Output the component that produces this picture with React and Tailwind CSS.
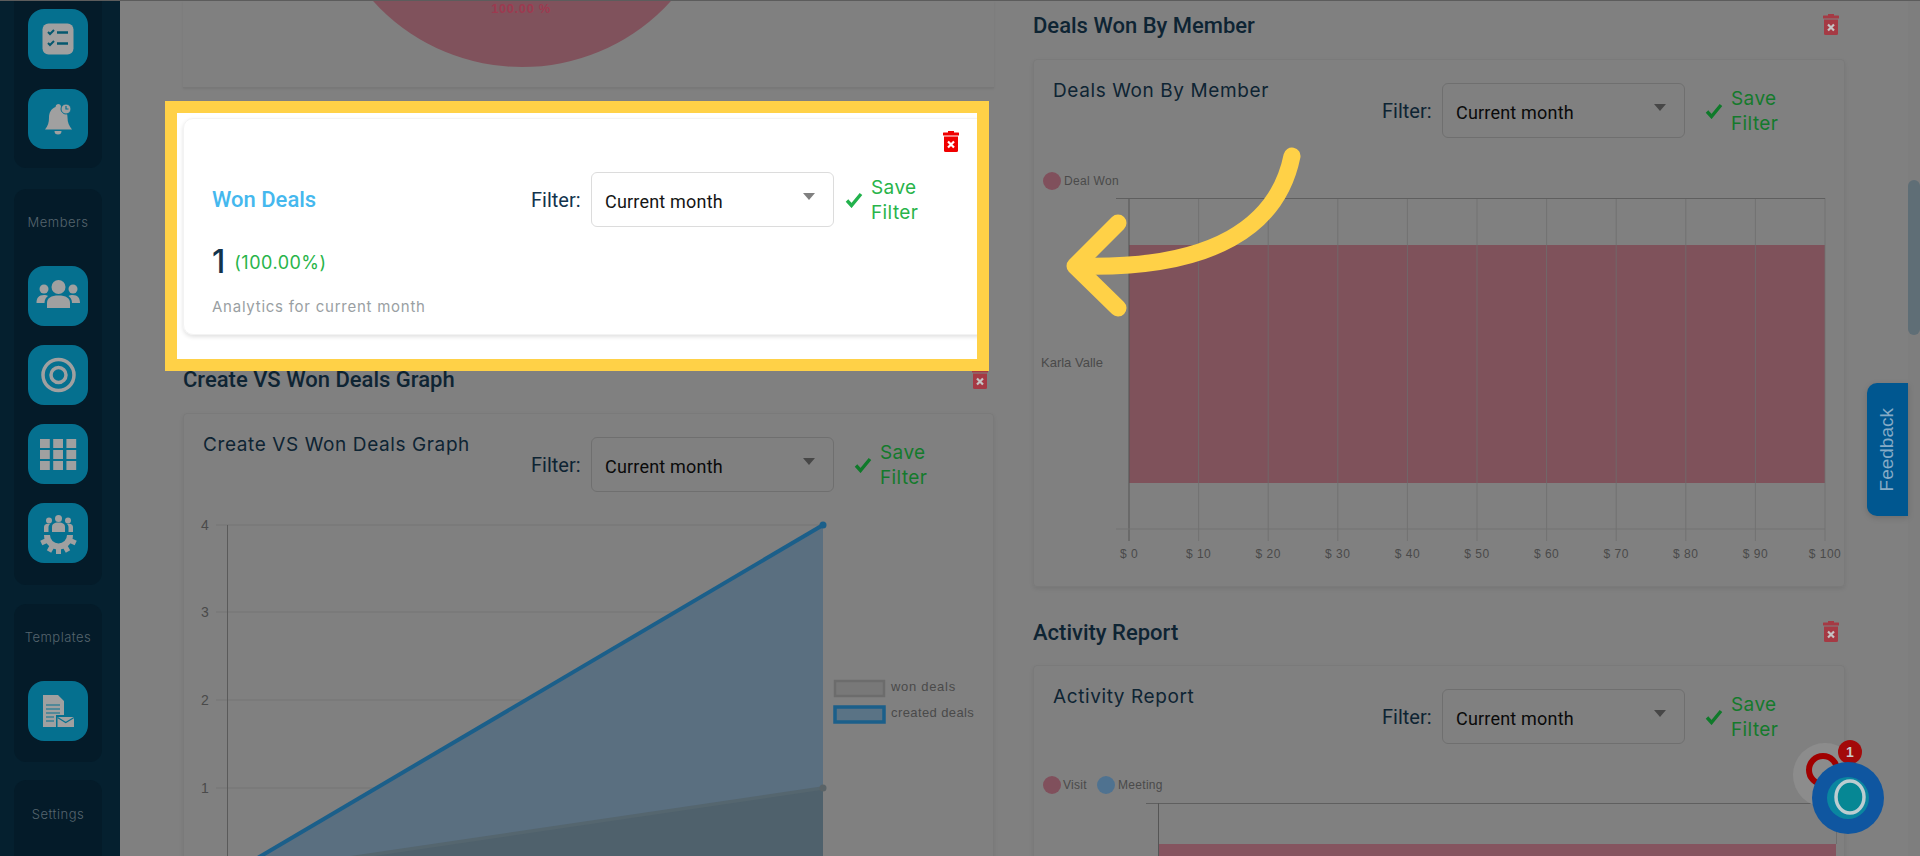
const roboto = "font-['Roboto',sans-serif]";
const inter = "font-['Inter',sans-serif]";
const btnBlue = "#05708f";

const Trash = ({ fill = "#a53a44", cross = "#c4c4c4" }) => (
  <svg width="16" height="21" viewBox="0 0 16 21" className="shrink-0">
    <rect x="5" y="0" width="6" height="2" fill={fill} />
    <rect x="0" y="1.5" width="16" height="3" rx="0.5" fill={fill} />
    <path d="M1 5.5h14V19.5a1.5 1.5 0 0 1-1.500 1.500H2.500A1.500 1.500 0 0 1 1 19.500Z" fill={fill} />
    <path d="M5 10.500l6 6M11 10.500l-6 6" stroke={cross} strokeWidth="2.200" />
  </svg>
);

const Check = ({ color }) => (
  <svg width="18" height="16" viewBox="0 0 18 16" className="shrink-0">
    <path d="M2 8.500l4.500 5L16 2" fill="none" stroke={color} strokeWidth="3.400" />
  </svg>
);

// filter + select + save, used on every card
const FilterBar = ({ light }) => (
  <div className={`flex items-center ${roboto}`}>
    <span className={`w-[60px] text-[20px] ${light ? "text-[#12344d]" : "text-[#0e2433]"}`}>Filter:</span>
    <div
      className={`flex h-[55px] w-[243px] items-center justify-between rounded-[6px] border pl-[13px] pr-[18px] ${
        light ? "border-[#dcdcdc] bg-white" : "border-[#6f6f6f]"
      }`}
    >
      <span className={`pt-1 text-[18px] tracking-[0.2px] ${light ? "text-[#151515]" : "text-[#0a0a0a]"}`}>Current month</span>
      <svg width="12" height="7" viewBox="0 0 12 7" className="mb-[6px]">
        <path d="M0 0h12L6 7Z" fill={light ? "#808080" : "#474747"} />
      </svg>
    </div>
    <div className={`flex items-center gap-2 ${light ? "ml-[11px]" : "ml-5"}`}>
      <Check color={light ? "#22b24c" : "#0f7a2a"} />
      <span className={`w-[50px] text-[19px] leading-[25px] tracking-[0.4px] ${inter} ${light ? "text-[#28b44a]" : "text-[#147a2c]"}`}>
        Save Filter
      </span>
    </div>
  </div>
);

const SectionTitle = ({ children }) => (
  <div className="flex h-6 items-center justify-between pr-[6px]">
    <h3 className={`text-[22px] font-medium text-[#0e2433] ${roboto}`}>{children}</h3>
    <div className="mb-[2px]">
      <Trash />
    </div>
  </div>
);

const CardHeader = ({ title }) => (
  <div className="flex items-start justify-between pl-[19px] pr-[63px] pt-[19px]">
    <h4 className={`text-[19px] leading-6 tracking-[0.6px] text-[#0e2433] ${inter}`}>{title}</h4>
    <div className="mt-1">
      <FilterBar />
    </div>
  </div>
);

const ChartCard = ({ title, children, className = "" }) => (
  <div className={`rounded-[4px] border border-[#7a7a7a] shadow-[0_2px_4px_rgba(0,0,0,0.08)] ${className}`}>
    <CardHeader title={title} />
    {children}
  </div>
);

const axisText = { fontFamily: "'Liberation Sans', sans-serif", fill: "#4a4a4a" };

const LineChart = () => (
  <svg viewBox="184 500 808 400" className="block h-[400px] w-[808px]">
    {[526, 613, 701, 789].map((y) => (
      <line key={y} x1="216" x2="823" y1={y} y2={y} stroke="#757575" />
    ))}
    {[["4", 526], ["3", 613], ["2", 701], ["1", 789]].map(([t, y]) => (
      <text key={t} x="205" y={y + 5} fontSize="14" textAnchor="middle" style={axisText}>{t}</text>
    ))}
    <line x1="227.500" x2="227.500" y1="526" y2="900" stroke="#5a5a5a" />
    <path d="M227 877L823 526V900H227Z" fill="#5a6f80" />
    <path d="M227 877L823 789V900H227Z" fill="#4f616c" />
    <path d="M227 877L823 789" stroke="#55666f" strokeWidth="3.500" fill="none" />
    <circle cx="823" cy="789" r="3.500" fill="#5a6367" />
    <path d="M227 877L823 526" stroke="#1b5f8a" strokeWidth="4" fill="none" />
    <circle cx="823" cy="526" r="3.500" fill="#1b5f8a" />
    <rect x="835" y="682" width="49" height="15" fill="#787878" stroke="#6c6c6c" strokeWidth="2.500" />
    <rect x="835" y="708" width="49" height="15" fill="#5a7385" stroke="#1b5f8a" strokeWidth="3.500" />
    <text x="891" y="692" fontSize="13" letterSpacing="0.700" style={axisText}>won deals</text>
    <text x="891" y="718" fontSize="13" letterSpacing="0.400" style={axisText}>created deals</text>
  </svg>
);

const ticks = [0, 10, 20, 30, 40, 50, 60, 70, 80, 90, 100];

const BarChart = () => (
  <svg viewBox="1034 160 810 400" className="block h-[400px] w-[810px]">
    <circle cx="1052" cy="181" r="9" fill="#80505c" />
    <text x="1064" y="185" fontSize="12" letterSpacing="0.300" style={axisText}>Deal Won</text>
    <path d="M1129 245H1825V483H1129Z" fill="#7f525b" />
    {ticks.map((t, i) => (
      <g key={t}>
        <line x1={1129 + i * 69.6} x2={1129 + i * 69.6} y1="198" y2="541" stroke={i ? "#6e6e6e" : "#555"} strokeOpacity={i ? 0.8 : 1} />
        <text x={1129 + i * 69.6} y="558" fontSize="12" letterSpacing="0.500" textAnchor="middle" style={axisText}>{`$ ${t}`}</text>
      </g>
    ))}
    <line x1="1116" x2="1825" y1="198.500" y2="198.500" stroke="#5f5f5f" />
    <line x1="1116" x2="1825" y1="529" y2="529" stroke="#727272" />
    <text x="1041" y="367" fontSize="13" style={axisText}>Karla Valle</text>
  </svg>
);

const ActivityChart = () => (
  <svg viewBox="1034 760 810 100" className="block h-[100px] w-[810px]">
    <circle cx="1052" cy="786" r="9" fill="#80505c" />
    <text x="1063" y="790" fontSize="12" letterSpacing="0.300" style={axisText}>Visit</text>
    <circle cx="1106" cy="786" r="9" fill="#4f7290" />
    <text x="1118" y="790" fontSize="12" letterSpacing="0.300" style={axisText}>Meeting</text>
    <path d="M1158 845H1836V860H1158Z" fill="#85545f" />
    <line x1="1146" x2="1836" y1="804.500" y2="804.500" stroke="#5f5f5f" />
    <line x1="1158.500" x2="1158.500" y1="804" y2="860" stroke="#555" />
    <line x1="1836.500" x2="1836.500" y1="804" y2="845" stroke="#6e6e6e" />
  </svg>
);

const SideBtn = ({ children }) => (
  <div className="flex h-[60px] w-[60px] items-center justify-center rounded-[16px] bg-[#05708f]">
    <svg width="44" height="44" viewBox="0 0 44 44" fill="#a0a0a0">{children}</svg>
  </div>
);

const SideLabel = ({ children }) => (
  <div className={`h-5 text-center text-[13px] font-light leading-5 tracking-[0.5px] text-[#56656e] ${inter}`}>{children}</div>
);

const Sidebar = () => (
  <aside className="flex h-full w-[120px] shrink-0 flex-col bg-[#05202f] pl-[14px] pr-[18px]">
    <div className="-mt-[21px] flex flex-col items-center gap-5 rounded-[12px] bg-[#041b29] pb-[19px] pt-[29px]">
      <SideBtn>
        <rect x="6.500" y="6.500" width="31" height="31" rx="6" />
        <path d="M12 15l2 2 4-4M12 26l2 2 4-4" fill="none" stroke="#04586f" strokeWidth="2" />
        <path d="M21 15.500h11M21 26.500h11" fill="none" stroke="#04586f" strokeWidth="2.400" />
      </SideBtn>
      <SideBtn>
        <path d="M22 7a3 3 0 0 1 3 3c5 1.500 6.500 6 6.500 10.500 0 5 1.500 8.500 4.500 12H9c3-3.500 4-7 4-12C13 16 15 11.500 19.500 10A3 3 0 0 1 22 7Z" />
        <path d="M18.500 34h7a3.500 3.500 0 0 1-7 0Z" />
        <circle cx="30" cy="12" r="5" stroke={btnBlue} strokeWidth="1" />
        <path d="M30 9v3h2.500" fill="none" stroke={btnBlue} strokeWidth="1.200" />
      </SideBtn>
    </div>
    <div className="mt-[21px] flex flex-col items-center rounded-[12px] bg-[#041b29] pb-[22px] pt-[23px]">
      <SideLabel>Members</SideLabel>
      <div className="mt-[34px] flex flex-col gap-[19px]">
        <SideBtn>
          <circle cx="22.500" cy="13" r="7" />
          <circle cx="8" cy="15" r="4.500" />
          <circle cx="37" cy="15" r="4.500" />
          <path d="M11 34v-5c0-5 4-7.500 11.500-7.500S34 24 34 29v5Z" />
          <path d="M0.500 29c0-5 2-8 7.500-8 1.500 0 3 0.300 4 1-2 1.500-3.500 3.500-3.500 7Z" />
          <path d="M44 29c0-5-2-8-7.500-8-1.500 0-3 0.300-4 1 2 1.500 3.500 3.500 3.500 7Z" />
        </SideBtn>
        <SideBtn>
          <circle cx="22.500" cy="22" r="15.500" fill="none" stroke="#a0a0a0" strokeWidth="3.500" />
          <circle cx="22.500" cy="22" r="7.500" fill="none" stroke="#a0a0a0" strokeWidth="3.500" />
        </SideBtn>
        <SideBtn>
          {[8, 19, 30].flatMap((y) =>
            [4, 17.200, 30.400].map((x) => <rect key={`${x}-${y}`} x={x} y={y - 1} width="9.800" height="9" />)
          )}
        </SideBtn>
        <SideBtn>
          <circle cx="22.500" cy="7.500" r="3.500" />
          <circle cx="13" cy="9.500" r="3" />
          <circle cx="32" cy="9.500" r="3" />
          <path d="M16 21v-5c0-3 2-4.500 6.500-4.500s6.500 1.500 6.500 4.500v5Z" />
          <path d="M8 21v-5c0-2 2-4 6-3-1 1-1.500 2-1.500 3.500V21ZM37 21v-5c0-2-2-4-6-3 1 1 1.500 2 1.500 3.500V21Z" />
          <path d="M8 24h6a8.500 8.500 0 0 0 17 0h6a14.500 14.500 0 0 1-29 0Z" />
          {[-65, -30, 0, 30, 65].map((a) => (
            <rect key={a} x="20" y="37" width="5" height="6" transform={`rotate(${a} 22.500 24)`} />
          ))}
        </SideBtn>
      </div>
    </div>
    <div className="mt-[19px] flex flex-col items-center rounded-[12px] bg-[#041b29] pb-[21px] pt-[23px]">
      <SideLabel>Templates</SideLabel>
      <div className="mt-[34px]">
        <SideBtn>
          <path d="M7 6h15l6 6v14h-8v12H7Z" />
          <path d="M10 16h14M10 20h14M10 24h14M10 28h8M10 32h8" stroke={btnBlue} strokeWidth="1.200" fill="none" />
          <path d="M21.500 28h16.500v10H21.500Z" />
          <path d="M21.500 28.500l8.250 5 8.250-5" fill="none" stroke={btnBlue} strokeWidth="1.200" />
        </SideBtn>
      </div>
    </div>
    <div className="mt-[18px] flex-1 rounded-t-[12px] bg-[#041b29] pt-6">
      <SideLabel>Settings</SideLabel>
    </div>
  </aside>
);

// the highlighted card sits in the column flow, wrapped in the yellow frame
const WonDealsSpotlight = () => (
  <div className="relative z-10 -ml-[18px] mt-[13px] h-[270px] w-[824px] overflow-hidden border-[12px] border-[#ffd147] bg-white pl-[6px] pt-[5px]">
    <div className="w-[810px] rounded-[10px] border border-[#f3f3f3] pb-[17px] pl-[28px] pr-[71px] pt-[12px] shadow-[0_2px_4px_rgba(0,0,0,0.12)]">
      <div className="flex justify-end">
        <div className="-mr-[38px]">
          <Trash fill="#f00000" cross="#ffffff" />
        </div>
      </div>
      <div className="mt-5 flex items-center justify-between">
        <span className={`text-[22px] font-medium text-[#45b8ee] ${roboto}`}>Won Deals</span>
        <FilterBar light />
      </div>
      <div className="mt-[15px] flex h-10 items-center gap-[9px]">
        <span className={`text-[32px] font-medium text-[#12344d] ${inter}`}>1</span>
        <span className={`text-[18px] tracking-[0.5px] text-[#28b44a] ${inter}`}>(100.00%)</span>
      </div>
      <p className={`mt-[15px] h-5 text-[15px] leading-5 tracking-[0.75px] text-[#9a9fa3] ${inter}`}>
        Analytics for current month
      </p>
    </div>
  </div>
);

export default function App() {
  return (
    <div className="relative flex h-[856px] w-[1920px] overflow-hidden border-t border-[#5c5c5c] bg-[#808080]">
      <Sidebar />

      <main className="flex flex-1 gap-[39px] pl-[63px] pr-[63px]">
        <section className="w-[811px] shrink-0">
          <div className="h-[87px] overflow-hidden border-b border-[#787878] shadow-[0_1px_2px_rgba(0,0,0,0.08)]">
            <svg viewBox="183 1 810 87" className="block h-[87px] w-[810px]">
              <circle cx="522" cy="-134" r="201" fill="#80525c" />
              <text x="521" y="13" fontSize="13" fontWeight="700" letterSpacing="0.600" textAnchor="middle" fill="#9d3a50" style={{ fontFamily: "'Liberation Sans', sans-serif" }}>
                100.00 %
              </text>
            </svg>
          </div>
          <WonDealsSpotlight />
          <div className="-mt-1">
            <SectionTitle>Create VS Won Deals Graph</SectionTitle>
          </div>
          <ChartCard title="Create VS Won Deals Graph" className="mt-[22px] h-[500px] overflow-hidden">
            <div className="mt-[7px]">
              <LineChart />
            </div>
          </ChartCard>
        </section>

        <section className="w-[812px] shrink-0 pt-3">
          <SectionTitle>Deals Won By Member</SectionTitle>
          <ChartCard title="Deals Won By Member" className="mt-[22px] h-[528px] overflow-hidden">
            <div className="mt-[22px]">
              <BarChart />
            </div>
          </ChartCard>
          <div className="mt-[33px]">
            <SectionTitle>Activity Report</SectionTitle>
          </div>
          <ChartCard title="Activity Report" className="mt-[21px] h-[240px] overflow-hidden">
            <div className="mt-[15px]">
              <ActivityChart />
            </div>
          </ChartCard>
        </section>
      </main>

      <div className="w-3 shrink-0 bg-[#7e7e7e] pt-[179px]">
        <div className="h-[155px] rounded-[6px] bg-[#5f6e76]" />
      </div>

      {/* floating widgets and tutorial arrow */}
      <div className="absolute right-3 top-[382px] flex h-[133px] w-[41px] items-center justify-center rounded-l-[10px] bg-[#005790] shadow-[0_2px_6px_rgba(0,0,0,0.15)]">
        <span className="rotate-180 text-[19px] text-[#86abc6] [writing-mode:vertical-rl] font-['Liberation_Sans',sans-serif]">Feedback</span>
      </div>

      <svg viewBox="1780 720 140 136" className="absolute left-[1780px] top-[719px] h-[136px] w-[140px]">
        <circle cx="1825" cy="775" r="32" fill="#8c8c8c" />
        <circle cx="1823" cy="770" r="14" fill="none" stroke="#a00000" strokeWidth="6" />
        <circle cx="1850" cy="752" r="12" fill="#a30a0a" />
        <text x="1850" y="757" fontSize="14" fontWeight="700" textAnchor="middle" fill="#c9c9c9" style={{ fontFamily: "'Liberation Sans', sans-serif" }}>1</text>
        <circle cx="1848" cy="798" r="36" fill="#0f56a0" />
        <circle cx="1848" cy="798" r="21" fill="#0a86a0" />
        <ellipse cx="1850" cy="797" rx="14" ry="16" fill="#068794" stroke="#bccdd1" strokeWidth="3.500" />
      </svg>

      <svg viewBox="0 0 1920 856" className="pointer-events-none absolute left-0 top-[-1px] z-20 h-[856px] w-[1920px]">
        <path d="M1292 156C1278 225 1215 270 1077 266" fill="none" stroke="#ffd147" strokeWidth="17" strokeLinecap="round" />
        <path d="M1118 223L1075 266L1118 308" fill="none" stroke="#ffd147" strokeWidth="17" strokeLinecap="round" strokeLinejoin="round" />
      </svg>
    </div>
  );
}
